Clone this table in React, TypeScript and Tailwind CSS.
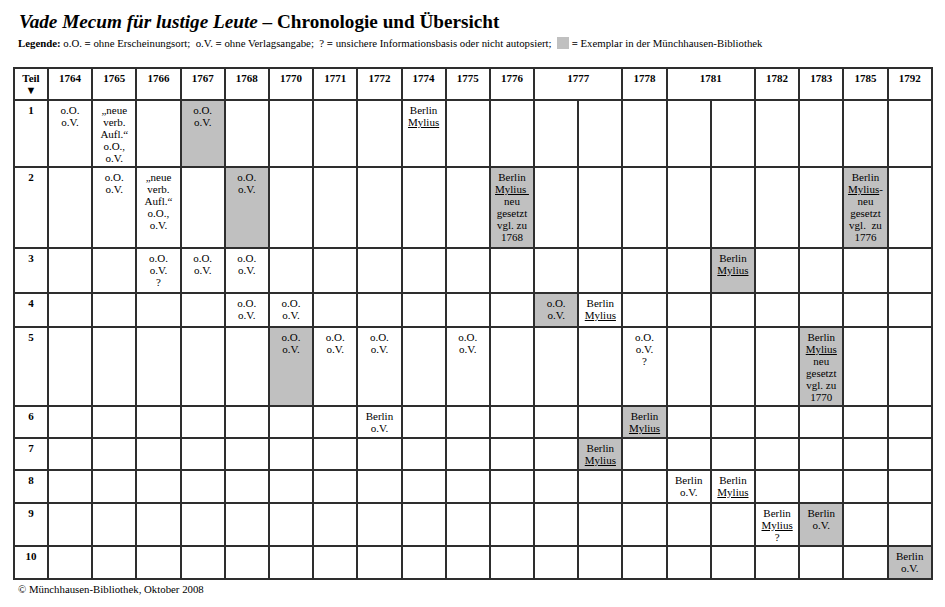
import React from "react";

type Cell = { lines: React.ReactNode[]; gray?: boolean };

const years = [
  { y: "1764", span: 1 },
  { y: "1765", span: 1 },
  { y: "1766", span: 1 },
  { y: "1767", span: 1 },
  { y: "1768", span: 1 },
  { y: "1770", span: 1 },
  { y: "1771", span: 1 },
  { y: "1772", span: 1 },
  { y: "1774", span: 1 },
  { y: "1775", span: 1 },
  { y: "1776", span: 1 },
  { y: "1777", span: 2 },
  { y: "1778", span: 1 },
  { y: "1781", span: 2 },
  { y: "1782", span: 1 },
  { y: "1783", span: 1 },
  { y: "1785", span: 1 },
  { y: "1792", span: 1 },
];

const oov = ["o.O.", "o.V."];
const bm = ["Berlin", <u key="m">Mylius</u>];
const bov = ["Berlin", "o.V."];
const neu = ["„neue", "verb.", "Aufl.“", "o.O.,", "o.V."];

// column index: 0=1764 ... 11/12=1777, 13=1778, 14/15=1781, 16=1782, 17=1783, 18=1785, 19=1792
const data: Record<number, Record<number, Cell>> = {
  1: {
    0: { lines: oov },
    1: { lines: neu },
    3: { lines: oov, gray: true },
    8: { lines: bm },
  },
  2: {
    1: { lines: oov },
    2: { lines: neu },
    4: { lines: oov, gray: true },
    10: {
      lines: ["Berlin", <u key="m">Mylius&nbsp;</u>, "neu", "gesetzt", "vgl. zu", "1768"],
      gray: true,
    },
    18: {
      lines: [
        "Berlin",
        <span key="m">
          <u>Mylius</u>-
        </span>,
        "neu",
        "gesetzt",
        "vgl.  zu",
        "1776",
      ],
      gray: true,
    },
  },
  3: {
    2: { lines: [...oov, "?"] },
    3: { lines: oov },
    4: { lines: oov },
    15: { lines: bm, gray: true },
  },
  4: {
    4: { lines: oov },
    5: { lines: oov },
    11: { lines: oov, gray: true },
    12: { lines: bm },
  },
  5: {
    5: { lines: oov, gray: true },
    6: { lines: oov },
    7: { lines: oov },
    9: { lines: oov },
    13: { lines: [...oov, "?"] },
    17: {
      lines: ["Berlin", <u key="m">Mylius</u>, "neu", "gesetzt", "vgl. zu", "1770"],
      gray: true,
    },
  },
  6: {
    7: { lines: bov },
    13: { lines: bm, gray: true },
  },
  7: {
    12: { lines: bm, gray: true },
  },
  8: {
    14: { lines: bov },
    15: { lines: bm },
  },
  9: {
    16: { lines: [...bm, "?"] },
    17: { lines: bov, gray: true },
  },
  10: {
    19: { lines: bov, gray: true },
  },
};

const cellBase =
  "border-r-2 border-b-2 border-[#2e2e2e] pt-[3px] text-center text-[11px] leading-[12px]";

export default function App() {
  return (
    <div className="w-[945px] h-[607px] overflow-hidden bg-white text-black font-['Liberation_Serif',serif]">
      <h1 className="pt-[10px] pl-[19px] text-[19.2px] leading-[23px] font-bold">
        <span className="italic">Vade Mecum für lustige Leute</span> – Chronologie und Übersicht
      </h1>

      <p className="mt-[3px] pl-[18px] text-[10.8px] leading-[14px] whitespace-pre flex items-center">
        <span className="font-bold">Legende:</span>
        <span> o.O. <b>=</b> ohne Erscheinungsort;  o.V. <b>=</b> ohne Verlagsangabe;  ? <b>=</b> unsichere Informationsbasis oder nicht autopsiert;  </span>
        <span className="inline-block w-[12px] h-[12px] bg-[#c0c0c0]" />
        <span> <b>=</b> Exemplar in der Münchhausen-Bibliothek</span>
      </p>

      <div className="mt-[17px] ml-[13px] w-[920px] grid grid-cols-[34px_repeat(20,44.2px)] grid-rows-[32px_67px_81px_45px_34px_79px_32px_32px_33px_43px_33px] border-l-2 border-t-2 border-[#2e2e2e]">
        <div className={`${cellBase} font-bold`}>
          <div>Teil</div>
          <div className="text-[11px] leading-[13px]">▼</div>
        </div>
        {years.map((y) => (
          <div
            key={y.y}
            className={`${cellBase} font-bold ${y.span === 2 ? "col-span-2" : ""}`}
          >
            {y.y}
          </div>
        ))}

        {Array.from({ length: 10 }, (_, i) => i + 1).map((row) => (
          <React.Fragment key={row}>
            <div className={`${cellBase} font-bold`}>{row}</div>
            {Array.from({ length: 20 }, (_, c) => c).map((col) => {
              const cell = data[row]?.[col];
              return (
                <div
                  key={col}
                  className={`${cellBase} whitespace-pre ${cell?.gray ? "bg-[#c0c0c0]" : ""}`}
                >
                  {cell?.lines.map((l, k) => (
                    <div key={k}>{l}</div>
                  ))}
                </div>
              );
            })}
          </React.Fragment>
        ))}
      </div>

      <p className="mt-[2px] pl-[18px] text-[10.8px] leading-[14px]">
        © Münchhausen-Bibliothek, Oktober 2008
      </p>
    </div>
  );
}
